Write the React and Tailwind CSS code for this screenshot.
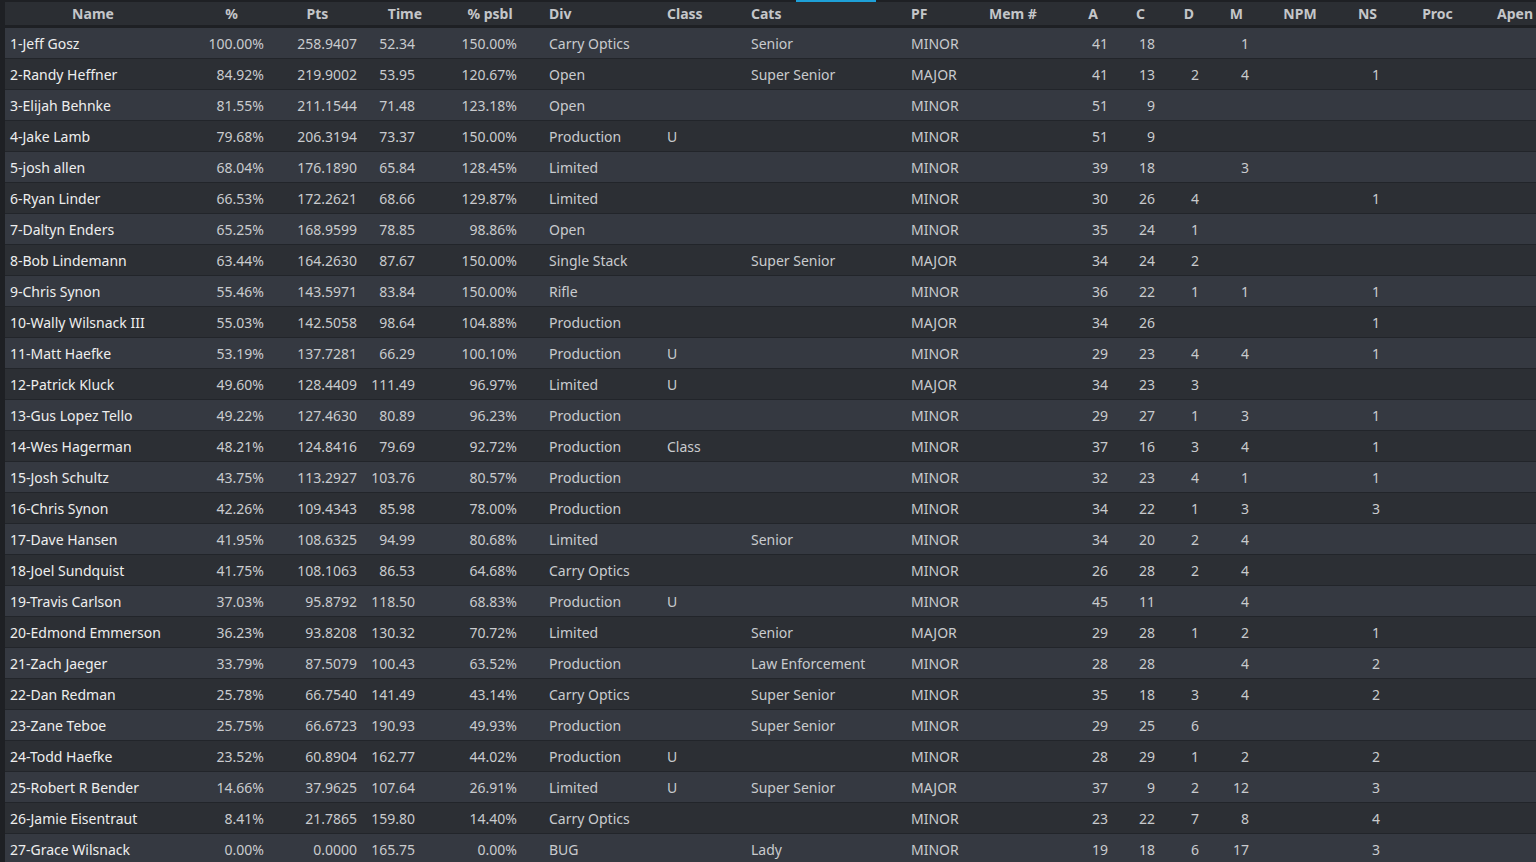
const cols = [
  { k: "Name", w: 188, cls: "text-left pl-[5px]", h: "text-center pr-[12px]" },
  { k: "%", w: 77, cls: "text-right pr-[6px]", h: "text-center" },
  { k: "Pts", w: 95, cls: "text-right pr-[8px]", h: "text-center" },
  { k: "Time", w: 80, cls: "text-right pr-[30px]", h: "text-center" },
  { k: "% psbl", w: 90, cls: "text-right pr-[18px]", h: "text-center" },
  { k: "Div", w: 120, cls: "text-left pl-[14px]", h: "text-left pl-[14px]" },
  { k: "Class", w: 85, cls: "text-left pl-[12px]", h: "text-left pl-[12px]" },
  { k: "Cats", w: 160, cls: "text-left pl-[11px]", h: "text-left pl-[11px]" },
  { k: "PF", w: 70, cls: "text-left pl-[11px]", h: "text-left pl-[11px]" },
  { k: "Mem #", w: 90, cls: "text-left pl-[19px]", h: "text-left pl-[19px]" },
  { k: "A", w: 60, cls: "text-right pr-[12px]", h: "text-right pr-[22px]" },
  { k: "C", w: 45, cls: "text-right pr-[10px]", h: "text-right pr-[20px]" },
  { k: "D", w: 48, cls: "text-right pr-[14px]", h: "text-right pr-[19px]" },
  { k: "M", w: 52, cls: "text-right pr-[16px]", h: "text-right pr-[22px]" },
  { k: "NPM", w: 70, cls: "text-center", h: "text-center" },
  { k: "NS", w: 65, cls: "text-right pr-[20px]", h: "text-right pr-[23px]" },
  { k: "Proc", w: 75, cls: "text-center", h: "text-center" },
  { k: "Apen", w: 85, cls: "text-left pl-[22px]", h: "text-left pl-[22px]" },
];

const raw = `1-Jeff Gosz|100.00%|258.9407|52.34|150.00%|Carry Optics||Senior|MINOR||41|18||1|||
2-Randy Heffner|84.92%|219.9002|53.95|120.67%|Open||Super Senior|MAJOR||41|13|2|4||1|
3-Elijah Behnke|81.55%|211.1544|71.48|123.18%|Open|||MINOR||51|9|||||
4-Jake Lamb|79.68%|206.3194|73.37|150.00%|Production|U||MINOR||51|9|||||
5-josh allen|68.04%|176.1890|65.84|128.45%|Limited|||MINOR||39|18||3|||
6-Ryan Linder|66.53%|172.2621|68.66|129.87%|Limited|||MINOR||30|26|4|||1|
7-Daltyn Enders|65.25%|168.9599|78.85|98.86%|Open|||MINOR||35|24|1||||
8-Bob Lindemann|63.44%|164.2630|87.67|150.00%|Single Stack||Super Senior|MAJOR||34|24|2||||
9-Chris Synon|55.46%|143.5971|83.84|150.00%|Rifle|||MINOR||36|22|1|1||1|
10-Wally Wilsnack III|55.03%|142.5058|98.64|104.88%|Production|||MAJOR||34|26||||1|
11-Matt Haefke|53.19%|137.7281|66.29|100.10%|Production|U||MINOR||29|23|4|4||1|
12-Patrick Kluck|49.60%|128.4409|111.49|96.97%|Limited|U||MAJOR||34|23|3||||
13-Gus Lopez Tello|49.22%|127.4630|80.89|96.23%|Production|||MINOR||29|27|1|3||1|
14-Wes Hagerman|48.21%|124.8416|79.69|92.72%|Production|Class||MINOR||37|16|3|4||1|
15-Josh Schultz|43.75%|113.2927|103.76|80.57%|Production|||MINOR||32|23|4|1||1|
16-Chris Synon|42.26%|109.4343|85.98|78.00%|Production|||MINOR||34|22|1|3||3|
17-Dave Hansen|41.95%|108.6325|94.99|80.68%|Limited||Senior|MINOR||34|20|2|4|||
18-Joel Sundquist|41.75%|108.1063|86.53|64.68%|Carry Optics|||MINOR||26|28|2|4|||
19-Travis Carlson|37.03%|95.8792|118.50|68.83%|Production|U||MINOR||45|11||4|||
20-Edmond Emmerson|36.23%|93.8208|130.32|70.72%|Limited||Senior|MAJOR||29|28|1|2||1|
21-Zach Jaeger|33.79%|87.5079|100.43|63.52%|Production||Law Enforcement|MINOR||28|28||4||2|
22-Dan Redman|25.78%|66.7540|141.49|43.14%|Carry Optics||Super Senior|MINOR||35|18|3|4||2|
23-Zane Teboe|25.75%|66.6723|190.93|49.93%|Production||Super Senior|MINOR||29|25|6||||
24-Todd Haefke|23.52%|60.8904|162.77|44.02%|Production|U||MINOR||28|29|1|2||2|
25-Robert R Bender|14.66%|37.9625|107.64|26.91%|Limited|U|Super Senior|MAJOR||37|9|2|12||3|
26-Jamie Eisentraut|8.41%|21.7865|159.80|14.40%|Carry Optics|||MINOR||23|22|7|8||4|
27-Grace Wilsnack|0.00%|0.0000|165.75|0.00%|BUG||Lady|MINOR||19|18|6|17||3|`;

const rows = raw.split("\n").map((l) => l.split("|"));

export default function App() {
  return (
    <div className="h-[862px] w-[1536px] overflow-hidden bg-[#1e2024] font-['Liberation_Sans'] text-[14px]">
      <div className="flex h-[2px]">
        <div className="w-[796px]" />
        <div className="w-[80px] bg-[#1ea0d8]" />
      </div>
      <div className="ml-[5px]">
        <div className="flex h-[26px] items-start pt-[1px] bg-[#2b2e33] border-b-[3px] border-[#1e2024] font-bold text-[#c4c6c9]">
          {cols.map((c) => (
            <div key={c.k} style={{ width: c.w }} className={`shrink-0 whitespace-nowrap ${c.h}`}>
              {c.k}
            </div>
          ))}
        </div>
        {rows.map((r, i) => (
          <div
            key={i}
            className={`flex h-[31px] items-center border-b border-[#22252a] ${i % 2 === 0 ? "bg-[#353941]" : "bg-[#2c2f34]"}`}
          >
            {cols.map((c, j) => (
              <div
                key={c.k}
                style={{ width: c.w }}
                className={`shrink-0 whitespace-nowrap pt-[1px] ${c.cls} ${j === 0 ? "text-[#eeeeee]" : "text-[#c9cbce]"}`}
              >
                {r[j]}
              </div>
            ))}
          </div>
        ))}
      </div>
    </div>
  );
}
